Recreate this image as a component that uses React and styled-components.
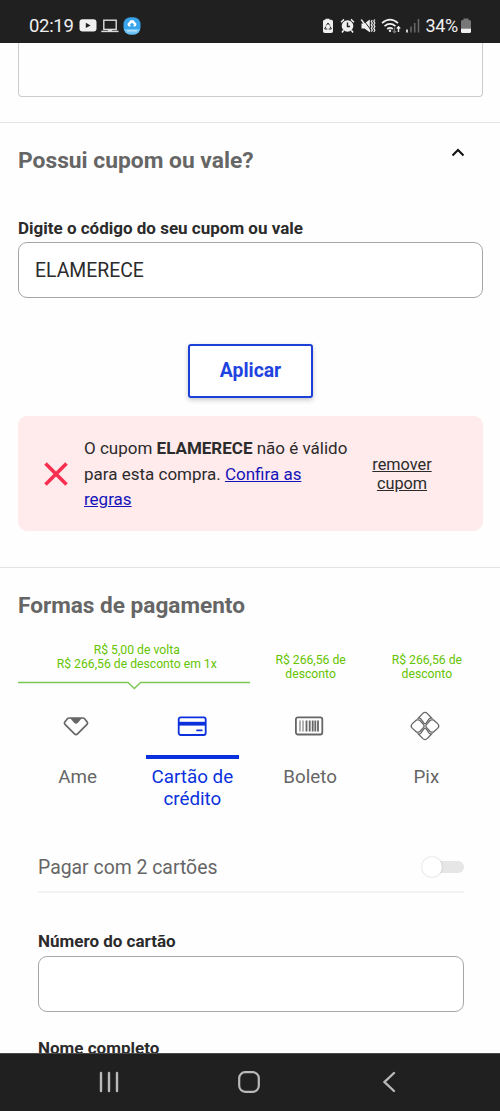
import React, { useState } from 'react'
import styled, { createGlobalStyle } from 'styled-components'

const GlobalStyle = createGlobalStyle`
*{
    box-sizing:border-box;
}
body{
    margin:0;
    background:#fefefe;
    font-family:Roboto, "Liberation Sans", sans-serif;
    color:#2b2b2b;
}
`

const StatusBar = () => (
    <StatusContainer>
        <StatusGroup>
            <Clock>02:19</Clock>
            <svg width="18" height="13" viewBox="0 0 18 13">
                <rect x="0.5" y="0.3" width="17" height="12.2" rx="3" fill="#f0f0f0"/>
                <path d="M6.8 3.8v5.2l4.8-2.6z" fill="#202020"/>
            </svg>
            <svg width="18" height="14" viewBox="0 0 18 14">
                <rect x="2.8" y="1.2" width="12.4" height="9.2" fill="none" stroke="#dcdcdc" strokeWidth="1.4"/>
                <path d="M0.3 12.4h17.2" stroke="#dcdcdc" strokeWidth="1.5"/>
                <path d="M7 11.6h4" stroke="#dcdcdc" strokeWidth="1.2"/>
            </svg>
            <svg width="18" height="18" viewBox="0 0 18 18">
                <rect x="0.5" y="0.3" width="17" height="17.2" rx="7" fill="#39a4ec"/>
                <path d="M1 12h16c-.8 3.6-3 5.5-6.5 5.5h-3C4 17.5 1.8 15.6 1 12z" fill="#6fc4f7"/>
                <path d="M4 13.9h10" stroke="#d6eefc" strokeWidth="1"/>
                <path d="M6.3 9.6a2.3 2.3 0 0 1-.2-4.4 3 3 0 0 1 5.8 0 2.3 2.3 0 0 1-.2 4.4h-1.2V7.8h1L9 5.7 6.5 7.8h1v1.8z" fill="#fff"/>
            </svg>
        </StatusGroup>
        <StatusGroup $gap={5}>
            <RecycleSvg width="12" height="16" viewBox="0 0 12 16">
                <path d="M3.5 1.8V.8h4v1h1.8Q11 1.8 11 3.5v9.8q0 1.7-1.7 1.7H2.7Q1 15 1 13.3V3.5Q1 1.8 2.7 1.8z" fill="#f0f0f0"/>
                <path d="M4.3 7.4 6 5l1.7 2.4M8.3 8.6l1 2.4H6.7M5.3 11H2.7l1-2.4" fill="none" stroke="#202020" strokeWidth="1"/>
            </RecycleSvg>
            <svg width="15" height="16" viewBox="0 0 15 16">
                <circle cx="7.5" cy="8" r="5.8" fill="#f0f0f0"/>
                <path d="M1 4.2 4 1.4M14 4.2 11 1.4M3.6 12.2 2 14.5M11.4 12.2 13 14.5" stroke="#f0f0f0" strokeWidth="1.5"/>
                <path d="M7.5 4.5v4H10" fill="none" stroke="#202020" strokeWidth="1.4"/>
            </svg>
            <svg width="16" height="16" viewBox="0 0 16 16">
                <path d="M1.5 5.5h3L9.8 1.5v12.7L4.500 10.500h-3z" fill="#f0f0f0"/>
                <path d="M2.800 1.200 11 12" stroke="#202020" strokeWidth="1"/>
                <path d="M1.200 1.500 10 13.500" stroke="#f0f0f0" strokeWidth="1.300"/>
                <path d="M12.300 2l-1 1.500 1 1.700-1 1.700 1 1.700-1 1.700 1 1.700-1 1.700M14.800 1.500l-1 1.700 1 1.800-1 1.800 1 1.800-1 1.800 1 1.800-1 1.800" fill="none" stroke="#e6e6e6" strokeWidth="1.300"/>
            </svg>
            <svg width="20" height="16" viewBox="0 0 20 16">
                <path d="M1 5.2q8-7 16 0M3.5 8.2q5.500-4.500 11 0M6.200 11q2.800-2.200 5.600 0" fill="none" stroke="#f0f0f0" strokeWidth="1.700"/>
                <circle cx="9" cy="12.8" r="1.2" fill="#f0f0f0"/>
                <path d="M13.5 9.5v5M11.8 13l1.7 1.6 1.7-1.6" fill="none" stroke="#777" strokeWidth="1.2"/>
                <path d="M17.5 14V8.8M15.8 10.4l1.7-1.7 1.7 1.7" fill="none" stroke="#f0f0f0" strokeWidth="1.4"/>
            </svg>
            <svg width="14" height="16" viewBox="0 0 14 16">
                <path d="M1 11.5v3" stroke="#f0f0f0" strokeWidth="1.7"/>
                <path d="M5 8.5v6M8.7 5v9.5M12.5 1v13.5" stroke="#676767" strokeWidth="1.6"/>
            </svg>
            <Percent>34%</Percent>
            <BatterySvg width="10" height="16" viewBox="0 0 10 16">
                <path d="M2.5 2V.6h5V2h1Q10 2 10 3.5v7H0v-7Q0 2 1.5 2z" fill="#777"/>
                <path d="M0 10.5h10v3q0 1.5-1.5 1.5h-7Q0 15 0 13.5z" fill="#f0f0f0"/>
            </BatterySvg>
        </StatusGroup>
    </StatusContainer>
)

const AmeIcon = () => (
    <svg width="32" height="32" viewBox="0 0 32 32">
        <path d="M9.2 8h13.6q1.2 0 2 1l2.4 3q.9 1.2-.2 2.3l-9.5 9.6q-1.5 1.5-3 0L5 14.3q-1.100-1.100-.2-2.300l2.400-3q.8-1 2-1z" fill="none" stroke="currentColor" strokeWidth="1.7"/>
        <path d="M10 8h12l-4.3 5q-1.7 1.6-3.4 0z" fill="currentColor"/>
    </svg>
)

const CardIcon = () => (
    <svg width="32" height="32" viewBox="0 0 32 32">
        <rect x="2.7" y="7.3" width="27" height="17.7" rx="2" fill="none" stroke="currentColor" strokeWidth="1.8"/>
        <path d="M2.5 13.7h27.4" stroke="currentColor" strokeWidth="3.8"/>
        <path d="M21 20.3h4.8" stroke="currentColor" strokeWidth="1.8" strokeLinecap="round"/>
    </svg>
)

const BarcodeIcon = () => (
    <svg width="32" height="32" viewBox="0 0 32 32">
        <rect x="2.9" y="7.3" width="26.4" height="17.2" rx="2" fill="none" stroke="currentColor" strokeWidth="1.8"/>
        <path d="M7 10.5v11M10 10.5v11" stroke="currentColor" strokeWidth="1"/>
        <path d="M13.5 10.5v11M16.7 10.5v11M19.7 10.5v11M22.3 10.5v11M25 10.5v11" stroke="currentColor" strokeWidth="1.8"/>
    </svg>
)

const PixIcon = () => (
    <svg width="32" height="32" viewBox="0 0 32 32" fill="none" stroke="currentColor" strokeWidth="1.3">
        {[0, 180].map(angle => (
            <g key={angle} transform={`rotate(${angle} 16 16)`}>
                <path d="M9.2 8.2 13.6 3.6q2.4-2.4 4.8 0L22.8 8.2h-1q-1 0-1.7.7l-3 4.3q-1.1 1.3-2.2 0l-3-4.3q-.7-.7-1.7-.7z"/>
                <path d="M7.5 9.9h2q.8 0 1.4.6l3.7 4.1q1.200 1.400 0 2.800l-3.700 4.100q-.6.6-1.400.6h-2L3.400 18.400q-2.400-2.400 0-4.800z"/>
            </g>
        ))}
    </svg>
)

const methods = [
    { id: 'ame', name: 'Ame', Icon: AmeIcon },
    { id: 'card', name: 'Cartão de crédito', Icon: CardIcon },
    { id: 'boleto', name: 'Boleto', Icon: BarcodeIcon },
    { id: 'pix', name: 'Pix', Icon: PixIcon },
]

const Coupon = () => {
    const [code, setCode] = useState('ELAMERECE')
    return (
        <CouponSection>
            <CouponHeader>
                <Title>Possui cupom ou vale?</Title>
                <svg width="14" height="10" viewBox="0 0 14 10">
                    <path d="M1.5 8.5 7 3l5.5 5.5" fill="none" stroke="#111" strokeWidth="2"/>
                </svg>
            </CouponHeader>
            <Label htmlFor="coupon">Digite o código do seu cupom ou vale</Label>
            <Input id="coupon" value={code} onChange={e => setCode(e.target.value)}/>
            <ApplyButton>Aplicar</ApplyButton>
            <Alert>
                <svg width="26" height="26" viewBox="0 0 26 26">
                    <path d="M2.5 2.5l21 21M23.5 2.5l-21 21" stroke="#f92f50" strokeWidth="3.6"/>
                </svg>
                <AlertText>
                    O cupom <b>ELAMERECE</b> não é válido para esta compra. <a href="#regras">Confira as regras</a>
                </AlertText>
                <RemoveButton>remover cupom</RemoveButton>
            </Alert>
        </CouponSection>
    )
}

const Payment = () => {
    const [method, setMethod] = useState('card')
    return (
        <PaymentSection>
            <Title $size={22.6}>Formas de pagamento</Title>
            <Offers>
                <WideOffer>
                    <span>R$ 5,00 de volta<br/>R$ 266,56 de desconto em 1x</span>
                    <svg width="232" height="10" viewBox="0 0 232 10">
                        <path d="M0 2.500h110l6.300 6 6.300-6H232" fill="none" stroke="#7cc653" strokeWidth="1.3"/>
                    </svg>
                </WideOffer>
                <Offer>R$ 266,56 de<br/>desconto</Offer>
                <Offer>R$ 266,56 de<br/>desconto</Offer>
            </Offers>
            <Tabs>
                {methods.map(({ id, name, Icon }) => (
                    <Tab key={id} $active={id === method} onClick={() => setMethod(id)}>
                        <Icon/>
                        <TabName $active={id === method}>{name}</TabName>
                    </Tab>
                ))}
            </Tabs>
            <CardForm>
                <TwoCards>
                    Pagar com 2 cartões
                    <Switch><Knob/></Switch>
                </TwoCards>
                <Label htmlFor="number">Número do cartão</Label>
                <NumberInput id="number"/>
                <Label>Nome completo</Label>
            </CardForm>
        </PaymentSection>
    )
}

const App = () => (
    <Screen>
        <GlobalStyle/>
        <StatusBar/>
        <Page>
            <PreviousBox/>
            <Coupon/>
            <Payment/>
        </Page>
        <NavBar>
            <svg width="24" height="24" viewBox="0 0 24 24">
                <path d="M4 3v18M12 3v18M20 3v18" stroke="#b9b9b9" strokeWidth="2.4" strokeLinecap="round"/>
            </svg>
            <svg width="24" height="24" viewBox="0 0 24 24">
                <rect x="2.2" y="2.2" width="19.6" height="19.6" rx="6" fill="none" stroke="#b9b9b9" strokeWidth="2.2"/>
            </svg>
            <svg width="24" height="24" viewBox="0 0 24 24">
                <path d="M17 3 7.5 12l9.500 9" fill="none" stroke="#b9b9b9" strokeWidth="2.4" strokeLinecap="round"/>
            </svg>
        </NavBar>
    </Screen>
)

export default App

const Screen = styled.div`
width:500px;
height:1111px;
display:flex;
flex-direction:column;
overflow:hidden;
`
const StatusContainer = styled.div`
height:43px;
flex:none;
display:flex;
justify-content:space-between;
align-items:center;
padding:8px 29px 0;
background:#202020;
color:#f0f0f0;
`
const StatusGroup = styled.div`
display:flex;
align-items:center;
gap:${props => props.$gap || 4}px;
& > svg{
    flex:none;
}
`
const Clock = styled.span`
font-size:18.5px;
line-height:24px;
letter-spacing:-0.3px;
margin-right:1px;
`
const Percent = styled.span`
font-size:18px;
line-height:24px;
letter-spacing:-0.3px;
`
const RecycleSvg = styled.svg`
margin-right:1px;
`
const BatterySvg = styled.svg`
margin-left:-2px;
`
const Page = styled.div`
height:1010px;
flex:none;
overflow:hidden;
`
const PreviousBox = styled.div`
height:54px;
margin:0 17px 25px 18px;
border:1px solid #ccc;
border-top:0;
border-radius:0 0 4px 4px;
`
const Section = styled.section`
display:flex;
flex-direction:column;
padding:0 17px 0 18px;
border-top:1px solid #e3e3e3;
`
const CouponSection = styled(Section)`
height:445px;
`
const PaymentSection = styled(Section)`
padding-top:24px;
`
const CouponHeader = styled.div`
display:flex;
justify-content:space-between;
align-items:flex-start;
padding:24px 18px 0 0;
margin-bottom:42px;
`
const Title = styled.h2`
margin:0;
font-size:${props => props.$size || 22.8}px;
line-height:28px;
font-weight:700;
color:#666;
`
const Label = styled.label`
font-size:17px;
line-height:22px;
font-weight:700;
margin-bottom:3px;
`
const Input = styled.input`
width:100%;
height:56px;
padding:0 16px;
border:1px solid #a6a6a6;
border-radius:9px;
background:#fff;
font-family:inherit;
font-size:19.4px;
color:#2b2b2b;
outline:none;
`
const NumberInput = styled(Input)`
margin:1px 0 25px;
`
const ApplyButton = styled.button`
align-self:center;
width:125px;
height:54px;
flex:none;
margin:46px 0 18px;
padding:0 0 2px;
border:2px solid #1c40d8;
border-radius:3px;
background:#fff;
box-shadow:0 2px 5px rgba(0,0,0,0.22);
font-family:inherit;
font-size:19.4px;
font-weight:700;
color:#1f43e0;
`
const Alert = styled.div`
height:115px;
display:flex;
align-items:center;
padding:0 47px 0 25px;
border-radius:9px;
background:#ffeaec;
& > svg{
    flex:none;
    margin-right:15px;
}
`
const AlertText = styled.p`
width:266px;
flex:none;
margin:0 18px 0 0;
padding-top:2px;
font-size:17px;
line-height:25.5px;
a{
    color:#1414b8;
}
`
const RemoveButton = styled.button`
flex:1;
padding:0;
border:0;
background:none;
font-family:inherit;
font-size:16.3px;
line-height:19px;
color:#2b2b2b;
text-decoration:underline;
`
const Offers = styled.div`
display:grid;
grid-template-columns:repeat(4, 1fr);
margin-top:23px;
font-size:12.2px;
line-height:14px;
text-align:center;
color:#65c400;
`
const WideOffer = styled.div`
grid-column:span 2;
display:flex;
flex-direction:column;
gap:9px;
& > span{
    padding-left:5px;
}
`
const Offer = styled.div`
padding:10px 0 0 4px;
`
const Tabs = styled.div`
display:grid;
grid-template-columns:repeat(4, 1fr);
margin-top:20px;
`
const Tab = styled.button`
display:flex;
flex-direction:column;
align-items:center;
height:100px;
padding:0;
border:0;
background:none;
font-family:inherit;
font-size:18.8px;
line-height:22px;
color:${props => props.$active ? '#0a31dc' : '#666'};
`
const TabName = styled.span`
width:93px;
margin-top:13px;
padding:7px 0 0 ${props => props.$active ? 0 : 3}px;
border-top:4px solid ${props => props.$active ? '#0a31dc' : 'transparent'};
`
const CardForm = styled.div`
display:flex;
flex-direction:column;
padding:0 19px 0 20px;
margin-top:33px;
`
const TwoCards = styled.div`
display:flex;
justify-content:space-between;
align-items:center;
height:50px;
margin-bottom:37px;
border-bottom:2px solid #f3f3f3;
font-size:19.4px;
color:#666;
`
const Switch = styled.div`
width:41px;
height:12px;
display:flex;
align-items:center;
border-radius:6px;
background:#e6e6e6;
`
const Knob = styled.span`
width:20px;
height:20px;
margin-left:-1px;
border-radius:50%;
background:#fff;
box-shadow:0 0 2px rgba(0,0,0,0.25);
`
const NavBar = styled.div`
height:58px;
flex:none;
display:flex;
justify-content:space-between;
align-items:center;
padding:0 99px 2px 97px;
background:#202020;
border-top:1px solid #4a4a4a;
`
